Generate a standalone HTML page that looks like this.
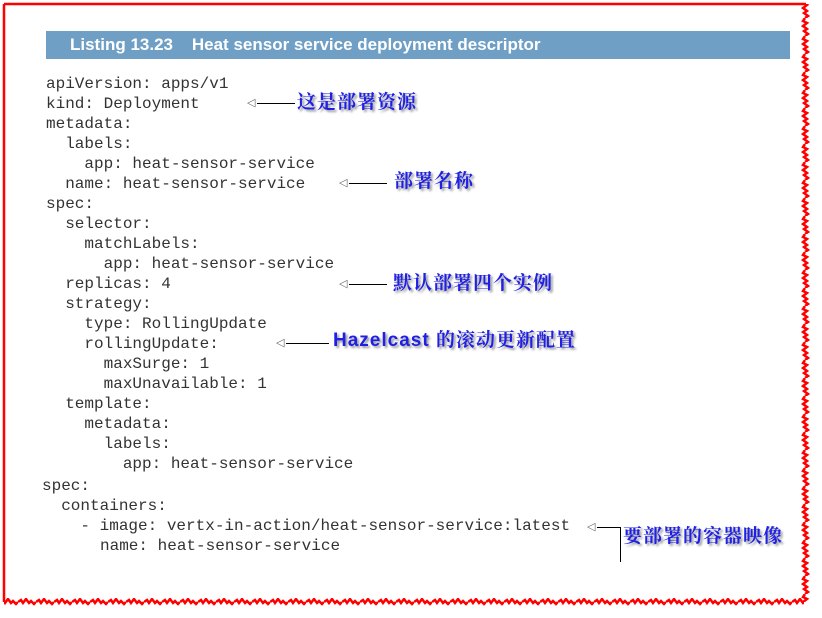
<!DOCTYPE html>
<html><head><meta charset="utf-8"><style>
body{margin:0;width:822px;height:618px;background:#fff;position:relative;overflow:hidden}
.c{position:absolute;font-family:"Liberation Mono",monospace;font-size:16px;color:#333;white-space:pre;line-height:20px}
.a{position:absolute;font-family:"Liberation Sans","Noto Serif CJK SC","Noto Sans CJK SC",sans-serif;font-weight:bold;font-size:19px;color:#1f1fe6;letter-spacing:1px;text-shadow:2px 2px 2px #999;white-space:nowrap;line-height:22px}
.ln{position:absolute;height:1px;background:#000}
.tri{position:absolute;font-size:11px;color:#666;font-family:"DejaVu Sans",sans-serif;line-height:12px}
</style></head><body>
<svg width="822" height="618" style="position:absolute;left:0;top:0">
<defs>
<pattern id="zb" x="0" y="598" width="18" height="10" patternUnits="userSpaceOnUse">
<polyline points="0,4 3,2 5,5 8,1 11,5 13,3 16,6 18,4" fill="none" stroke="#f00" stroke-width="2.5"/>
</pattern>
<pattern id="zr" x="801" y="0" width="10" height="18" patternUnits="userSpaceOnUse">
<polyline points="4,0 2,3 6,5 2,8 6,11 3,13 7,16 4,18" fill="none" stroke="#f00" stroke-width="2.5"/>
</pattern>
</defs>
<line x1="4" y1="4" x2="806" y2="4" stroke="#f00" stroke-width="2.5"/>
<line x1="4" y1="4" x2="4" y2="602" stroke="#f00" stroke-width="2.5"/>
<rect x="4" y="598" width="800" height="10" fill="url(#zb)"/>
<rect x="801" y="4" width="10" height="598" fill="url(#zr)"/>
</svg>
<div style="position:absolute;left:46px;top:31px;width:744px;height:28px;background:#6f9fc4"></div>
<div style="position:absolute;left:70px;top:34px;font-family:'Liberation Sans',sans-serif;font-weight:bold;font-size:17px;color:#fff;line-height:21px;white-space:pre">Listing 13.23    Heat sensor service deployment descriptor</div>
<div class="c" style="left:46px;top:74px">apiVersion: apps/v1
kind: Deployment
metadata:
  labels:
    app: heat-sensor-service
  name: heat-sensor-service
spec:
  selector:
    matchLabels:
      app: heat-sensor-service
  replicas: 4
  strategy:
    type: RollingUpdate
    rollingUpdate:
      maxSurge: 1
      maxUnavailable: 1
  template:
    metadata:
      labels:
        app: heat-sensor-service</div>
<div class="c" style="left:42px;top:476px">spec:
  containers:
    - image: vertx-in-action/heat-sensor-service:latest</div>
<div class="c" style="left:100px;top:536px">name: heat-sensor-service</div>

<span class="tri" style="left:247px;top:97px">◁</span><div class="ln" style="left:257px;top:103px;width:38px"></div>
<div class="a" style="left:297px;top:92px">这是部署资源</div>
<span class="tri" style="left:339px;top:177px">◁</span><div class="ln" style="left:349px;top:183px;width:38px"></div>
<div class="a" style="left:394px;top:171px">部署名称</div>
<span class="tri" style="left:339px;top:278px">◁</span><div class="ln" style="left:349px;top:284px;width:38px"></div>
<div class="a" style="left:393px;top:273px">默认部署四个实例</div>
<span class="tri" style="left:276px;top:337px">◁</span><div class="ln" style="left:286px;top:343px;width:43px"></div>
<div class="a" style="left:333px;top:330px">Hazelcast 的滚动更新配置</div>
<span class="tri" style="left:587px;top:521px">◁</span><div class="ln" style="left:597px;top:527px;width:24px"></div>
<div style="position:absolute;left:620px;top:527px;width:1px;height:35px;background:#000"></div>
<div class="a" style="left:623px;top:526px">要部署的容器映像</div>
</body></html>
